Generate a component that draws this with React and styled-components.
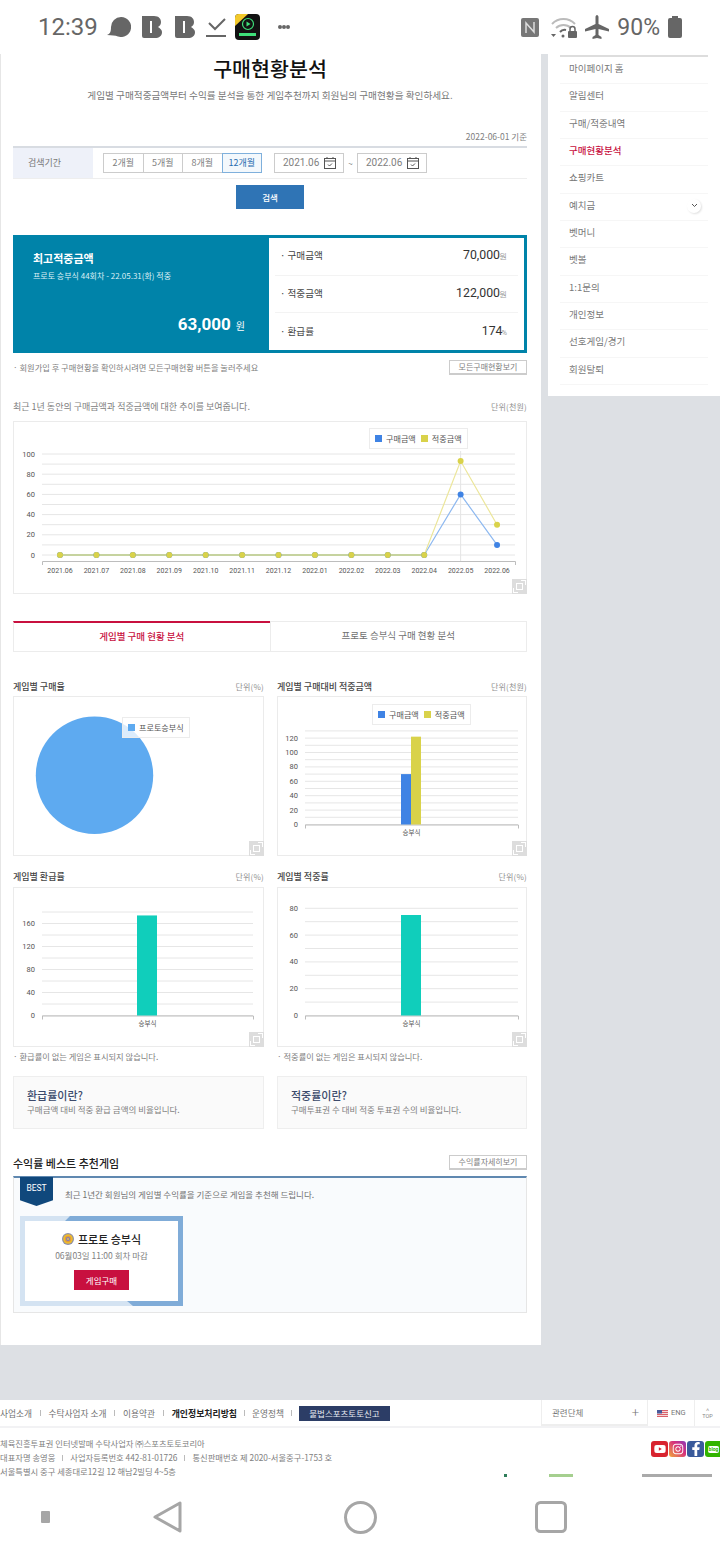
import React from 'react';
import styled, { createGlobalStyle } from 'styled-components';
import { FaYoutube, FaInstagram, FaFacebookF } from 'react-icons/fa';

const GlobalStyle = createGlobalStyle`
  html, body {
    margin: 0;
    padding: 0;
    background: #fff;
  }
  body {
    font-family: "Noto Sans CJK KR", "Noto Sans", sans-serif;
    color: #666;
  }
  * {
    box-sizing: border-box;
  }
`;

const RED = '#c8103f';
const BLUE = '#3f83e4';
const YELLOW = '#d9d24a';
const TEAL = '#10cebb';

const Screen = styled.div`
  width: 720px;
  height: 1560px;
  display: flex;
  flex-direction: column;
  overflow: hidden;
  background: #fff;
`;

/* status bar */
const StatusBar = styled.div`
  height: 54px;
  flex: none;
  display: flex;
  align-items: center;
  padding: 0 38px 0 38px;
  color: #666;
`;

const Clock = styled.span`
  font: 400 24px/1 Roboto, sans-serif;
  width: 69px;
`;

const NoticeIcons = styled.div`
  display: flex;
  align-items: center;
  gap: 11px;
`;

const SystemIcons = styled.div`
  margin-left: auto;
  display: flex;
  align-items: center;
  gap: 8px;
`;

const Battery = styled.span`
  font: 400 23px/1 Roboto, sans-serif;
`;

const Content = styled.div`
  height: 1346px;
  flex: none;
  display: flex;
  align-items: flex-start;
  background: #dde0e4;
`;

/* main column */
const Main = styled.main`
  width: 541px;
  height: 1291px;
  flex: none;
  background: #fff;
  border-left: 1px solid #e6e6e6;
  padding: 0 14px 0 12px;
`;

const PageTitle = styled.h1`
  margin: 0;
  height: 29px;
  font-size: 20.6px;
  line-height: 29px;
  font-weight: 500;
  color: #111;
  text-align: center;
`;

const PageLead = styled.p`
  margin: 5px 0 0;
  height: 14px;
  font-size: 9.65px;
  line-height: 14px;
  text-align: center;
  color: #777;
`;

const BaseDate = styled.div`
  margin-top: 28px;
  height: 12px;
  font-size: 8.5px;
  line-height: 12px;
  text-align: right;
  color: #808080;
`;

const SearchRow = styled.div`
  margin-top: 4px;
  height: 33px;
  display: flex;
  align-items: center;
  border-top: 2px solid #d8dce2;
  border-bottom: 1px solid #eee;
`;

const SearchLabel = styled.div`
  width: 80px;
  height: 100%;
  background: #eef1f9;
  font-size: 9px;
  line-height: 30px;
  padding-left: 15px;
  color: #777;
`;

const PeriodButtons = styled.div`
  display: flex;
  margin-left: 10px;
`;

const PeriodButton = styled.div`
  width: 40.5px;
  height: 20px;
  border: 1px solid ${(p) => (p.$active ? '#7fb0dc' : '#ccc')};
  margin-left: ${(p) => (p.$first ? '0' : '-1px')};
  background: ${(p) => (p.$active ? '#f3f8fc' : '#fff')};
  color: ${(p) => (p.$active ? '#2a6db0' : '#808080')};
  font-size: 9px;
  line-height: 18px;
  text-align: center;
  position: relative;
  z-index: ${(p) => (p.$active ? 1 : 0)};
`;

const DateField = styled.div`
  width: ${(p) => p.$width}px;
  height: 20px;
  border: 1px solid #ccc;
  display: flex;
  align-items: center;
  justify-content: space-between;
  padding: 0 7px 0 8px;
  font: 400 10px/1 Roboto, sans-serif;
  color: #808080;
`;

const DateFields = styled.div`
  display: flex;
  align-items: center;
  margin-left: 12px;
`;

const Tilde = styled.span`
  width: 13px;
  text-align: center;
  font-size: 8px;
  color: #777;
`;

const SearchButton = styled.div`
  margin: 6px auto 0;
  width: 68px;
  height: 24px;
  background: #2f74b5;
  color: #fff;
  font-size: 8.5px;
  font-weight: 500;
  line-height: 24px;
  text-align: center;
`;

/* summary box */
const Summary = styled.section`
  margin-top: 26px;
  height: 118px;
  display: flex;
  background: #0083a9;
  padding: 3px;
`;

const SummaryBest = styled.div`
  flex: 1;
  display: flex;
  flex-direction: column;
  padding: 14px 24px 15px 17px;
  color: #fff;
`;

const BestTitle = styled.div`
  font-size: 11px;
  font-weight: 700;
  line-height: 12px;
`;

const BestSub = styled.div`
  margin-top: 7px;
  font-size: 8px;
  line-height: 10px;
  color: #dceff5;
`;

const BestAmount = styled.div`
  margin-top: auto;
  display: flex;
  justify-content: flex-end;
  align-items: baseline;
  gap: 5px;
  line-height: 18px;
  font-size: 10px;
`;

const BestValue = styled.span`
  font: 700 17px/18px Roboto, sans-serif;
`;

const SummaryList = styled.div`
  width: 255px;
  flex: none;
  background: #fff;
  padding: 0 6px;
  display: flex;
  flex-direction: column;
`;

const SummaryRow = styled.div`
  flex: 1;
  display: flex;
  align-items: center;
  justify-content: space-between;
  padding: 0 11px 2px 5px;
  font-size: 9.6px;
  color: #444;
  border-bottom: ${(p) => (p.$last ? 'none' : '1px solid #f3f3f3')};
`;

const SummaryValue = styled.span`
  font: 400 12.3px/1 Roboto, sans-serif;
  color: #333;

  small {
    font-size: 7.5px;
    color: #999;
    margin-left: -1px;
  }
`;

const SpreadRow = styled.div`
  margin-top: ${(p) => p.$top ?? 0}px;
  height: ${(p) => p.$height ?? 15}px;
  display: flex;
  align-items: center;
  justify-content: space-between;
`;

const Note = styled.span`
  font-size: ${(p) => p.$size ?? 8.26}px;
  color: #808080;
`;

const OutlineButton = styled.span`
  width: 78px;
  height: 15px;
  border: 1px solid #ccc;
  border-bottom-width: 2px;
  background: #fff;
  font-size: 8px;
  line-height: 12px;
  text-align: center;
  color: #808080;
`;

const Unit = styled.span`
  font-size: 8px;
  letter-spacing: 0.2px;
  color: #909090;
`;

/* chart cards */
const ChartCard = styled.div`
  position: relative;
  height: ${(p) => p.$height}px;
  margin-top: ${(p) => p.$top}px;
  border: 1px solid #ebebeb;
  background: #fff;

  svg.plot {
    display: block;
  }
`;

const Legend = styled.div`
  position: absolute;
  left: ${(p) => p.$left}px;
  top: ${(p) => p.$top}px;
  height: 21px;
  padding: 0 5px 0 5px;
  display: flex;
  align-items: center;
  gap: 5px;
  border: 1px solid #ececec;
  background: rgba(255, 255, 255, 0.78);
  font-size: 8.1px;
  color: #555;
`;

const LegendItem = styled.span`
  display: flex;
  align-items: center;
  gap: 4px;

  &::before {
    content: '';
    width: 7px;
    height: 7px;
    background: ${(p) => p.$color};
  }
`;

const ExpandButton = styled.div`
  position: absolute;
  right: -1px;
  bottom: -1px;
  width: 15px;
  height: 15px;
  background: #ddd;
  display: flex;
  align-items: center;
  justify-content: center;
`;

const Tabs = styled.div`
  margin-top: 27px;
  height: 31px;
  display: flex;
`;

const Tab = styled.div`
  flex: 1;
  border: 1px solid #ececec;
  border-top: ${(p) => (p.$active ? `2px solid ${RED}` : '1px solid #ececec')};
  margin-left: ${(p) => (p.$active ? '0' : '-1px')};
  color: ${(p) => (p.$active ? RED : '#707070')};
  font-size: 9.5px;
  font-weight: ${(p) => (p.$active ? 500 : 400)};
  line-height: ${(p) => (p.$active ? '26px' : '27px')};
  text-align: center;
`;

const ChartGrid = styled.div`
  display: grid;
  grid-template-columns: 251px 250px;
  column-gap: 13px;
`;

const PanelTitle = styled.span`
  font-size: 9px;
  font-weight: 500;
  color: #444;
`;

const InfoCard = styled.div`
  height: 53px;
  margin-top: 14px;
  border: 1px solid #eee;
  background: #fafafa;
  padding: 11px 13px 0;
`;

const InfoTitle = styled.div`
  font-size: 11px;
  font-weight: 500;
  line-height: 14px;
  color: #3c4a6b;
`;

const InfoText = styled.div`
  font-size: 8.5px;
  line-height: 14px;
  color: #808080;
`;

const SectionTitle = styled.span`
  font-size: 11px;
  font-weight: 500;
  color: #222;
`;

/* recommended game */
const BestPanel = styled.section`
  position: relative;
  margin-top: 6px;
  height: 137px;
  border: 1px solid #e6e6e6;
  border-top: 2px solid #5f88b0;
  background: #f9fbfd;
  padding: 0 6px;
`;

const Ribbon = styled.div`
  position: absolute;
  left: 6px;
  top: -1px;
  width: 33px;
  height: 29px;
  background: #10487c;
  clip-path: polygon(0 0, 100% 0, 100% 80%, 50% 100%, 0 80%);
  color: #fff;
  font: 400 8.5px/22px Roboto, sans-serif;
  text-align: center;
`;

const BestLead = styled.p`
  margin: 0;
  padding: 10px 0 0 45px;
  font-size: 8.5px;
  line-height: 13px;
  color: #707070;
`;

const GameFrame = styled.div`
  margin-top: 15px;
  width: 163px;
  height: 90px;
  padding: 5px;
  background: #d4e3f2;
  position: relative;

  &::before {
    content: '';
    position: absolute;
    inset: 0;
    background: #80acd8;
    clip-path: polygon(50px 0, 100% 0, 100% 100%, 113px 100%, 107px 85px, 158px 85px, 158px 5px, 45px 5px);
  }
`;

const GameCard = styled.div`
  position: relative;
  height: 80px;
  background: #fff;
  display: flex;
  flex-direction: column;
  align-items: center;
  padding-top: 11px;
`;

const GameName = styled.div`
  display: flex;
  align-items: center;
  gap: 4px;
  font-size: 11px;
  font-weight: 500;
  line-height: 14px;
  color: #222;
`;

const GameDue = styled.div`
  margin-top: 3px;
  font-size: 8.5px;
  line-height: 12px;
  color: #808080;
`;

const BuyButton = styled.div`
  margin-top: 9px;
  width: 55px;
  height: 20px;
  background: ${RED};
  color: #fff;
  font-size: 8.5px;
  line-height: 20px;
  text-align: center;
`;

/* side menu */
const Side = styled.aside`
  width: 172px;
  height: 342px;
  margin-left: 7px;
  background: #fff;
  padding: 1px 12px 0;
`;

const SideList = styled.ul`
  list-style: none;
  margin: 0;
  padding: 0;
  border-top: 2px solid #ddd;
`;

const SideItem = styled.li`
  position: relative;
  height: 27.35px;
  padding-left: 9px;
  border-bottom: 1px solid #f6f6f6;
  font-size: 9.5px;
  line-height: 23px;
  font-weight: ${(p) => (p.$active ? 500 : 400)};
  color: ${(p) => (p.$active ? RED : '#787878')};
`;

const SideToggle = styled.span`
  position: absolute;
  right: 7px;
  top: 5px;
  width: 14px;
  height: 14px;
  border-radius: 50%;
  background: #fff;
  box-shadow: 1px 1px 2px rgba(0, 0, 0, 0.12);
  display: flex;
  align-items: center;
  justify-content: center;
`;

/* footer */
const Footer = styled.footer`
  height: 76.5px;
  flex: none;
  overflow: hidden;
  background: #fff;
`;

const FooterTop = styled.div`
  height: 28px;
  display: flex;
  align-items: center;
  border-bottom: 2px solid #f2f2f4;
  font-size: 8.7px;
  color: #6a6a6a;
`;

const FooterLink = styled.span`
  font-size: ${(p) => (p.$strong ? '8.9px' : 'inherit')};
  font-weight: ${(p) => (p.$strong ? 700 : 400)};
  color: ${(p) => (p.$strong ? '#222' : '#707070')};
`;

const FooterSep = styled.i`
  flex: none;
  width: 1px;
  height: 6px;
  background: #bbb;
  margin: 0 ${(p) => p.$gap ?? 7.8}px;
`;

const ReportButton = styled.span`
  width: 91px;
  height: 15px;
  background: #2c3d66;
  color: #e8ebf2;
  font-size: 8.5px;
  line-height: 15px;
  text-align: center;
`;

const FamilySelect = styled.div`
  width: 107px;
  height: 100%;
  border: 1px solid #eee;
  border-top: none;
  border-bottom-width: 2px;
  display: flex;
  align-items: center;
  justify-content: space-between;
  padding: 0 8px 0 10px;
  font-size: 8.5px;
  color: #777;

  b {
    font: 300 13px/1 Roboto, sans-serif;
  }
`;

const FooterTopRight = styled.div`
  margin-left: auto;
  display: flex;
  align-items: center;
  height: 100%;
`;

const LangButton = styled.span`
  width: 47px;
  height: 100%;
  display: flex;
  align-items: center;
  gap: 3px;
  padding-left: 9px;
  border-right: 1px solid #eee;
  font: 400 7.5px/1 Roboto, sans-serif;
  color: #777;
`;

const TopButton = styled.span`
  width: 25px;
  text-align: center;
  font: 400 5.5px/6px Roboto, sans-serif;
  color: #888;
`;

const FooterBody = styled.div`
  display: flex;
  justify-content: space-between;
`;

const FooterInfo = styled.div`
  padding-top: 9px;
  font-size: 8.3px;
  line-height: 13.8px;
  color: #808080;
`;

const FooterLine = styled.div`
  display: flex;
  align-items: center;
`;

const FooterAside = styled.div`
  width: 216px;
  padding-top: 13px;
`;

const Socials = styled.div`
  display: flex;
  justify-content: flex-end;
  gap: 1px;
  margin-right: -2px;
`;

const SocialIcon = styled.span`
  width: 17px;
  height: 16px;
  border-radius: 3px;
  background: ${(p) => p.$bg};
  color: #fff;
  font-size: ${(p) => p.$size ?? 12}px;
  display: flex;
  align-items: center;
  justify-content: center;
`;

const BlogMark = styled.b`
  font: 700 5px/7px Roboto, sans-serif;
  color: #32b400;
  background: #fff;
  padding: 0 1px;
  border-radius: 2px;
`;

const CertRow = styled.div`
  height: 4px;
  margin-top: 17px;
  display: flex;
  align-items: flex-start;
`;

const CertMark = styled.i`
  height: 3px;
  background: ${(p) => p.$color};
  width: ${(p) => p.$width}px;
  margin-left: ${(p) => p.$gap}px;
`;

/* android navigation */
const NavBar = styled.nav`
  flex: 1;
  background: #fff;
  display: grid;
  grid-template-columns: 90px 156px 228px 154px 1fr;
  align-items: center;
  justify-items: center;
  padding-bottom: 2px;
`;

const NavDot = styled.i`
  width: 9px;
  height: 12px;
  border-radius: 1px;
  background: #a6a6a6;
`;

const months = ['2021.06', '2021.07', '2021.08', '2021.09', '2021.10', '2021.11', '2021.12', '2022.01', '2022.02', '2022.03', '2022.04', '2022.05', '2022.06'];
const buyTrend = [0, 0, 0, 0, 0, 0, 0, 0, 0, 0, 0, 60, 10];
const hitTrend = [0, 0, 0, 0, 0, 0, 0, 0, 0, 0, 0, 93, 30];
const sideMenu = ['마이페이지 홈', '알림센터', '구매/적중내역', '구매현황분석', '쇼핑카트', '예치금', '벳머니', '벳볼', '1:1문의', '개인정보', '선호게임/경기', '회원탈퇴'];
const periods = ['2개월', '5개월', '8개월', '12개월'];

const ExpandIcon = () => (
  <ExpandButton>
    <svg width="15" height="15" viewBox="0 0 15 15" fill="none" stroke="#fff" shapeRendering="crispEdges">
      <rect x="4.5" y="4.5" width="6" height="6" />
      <path d="M9 1.500h4.500V6M6 13.500H1.500V9" />
    </svg>
  </ExpandButton>
);

// y grid with value labels, shared by the line and the bar charts
const Axis = ({ left, right, zero, scale, max, gridStep, labelStep, axisY }) => {
  const lines = [];
  for (let v = 0; v <= max; v += gridStep) lines.push(v);
  return (
    <g>
      {lines.map((v) => (
        <line key={v} x1={left} x2={right} y1={zero - v * scale} y2={zero - v * scale} stroke="#e6e6e6" />
      ))}
      {lines.filter((v) => v % labelStep === 0).map((v) => (
        <text key={v} x={left - 7} y={zero - v * scale + 2.5} textAnchor="end" fontSize="7.5" fontFamily="Roboto, sans-serif" fill="#555">
          {v}
        </text>
      ))}
      <path d={`M${left + 0.5} ${axisY + 4}V${axisY + 0.5}H${right + 0.5}V${axisY + 4}`} fill="none" stroke="#bdbdbd" />
    </g>
  );
};

const TrendChart = () => {
  const left = 28;
  const right = 501;
  const zero = 133;
  const scale = 1.01;
  const px = (i) => 46 + i * 36.42;
  const toPoints = (data) => data.map((v, i) => `${px(i)},${zero - v * scale}`).join(' ');
  return (
    <svg className="plot" width="512" height="171">
      <Axis left={left} right={right} zero={zero} scale={scale} max={100} gridStep={10} labelStep={20} axisY={139} />
      <line x1={px(11)} x2={px(11)} y1="29" y2="139" stroke="#e4e4e4" />
      <polyline points={toPoints(buyTrend)} fill="none" stroke="#8db8f0" strokeWidth="1.2" />
      <polyline points={toPoints(hitTrend)} fill="none" stroke="#ece69a" strokeWidth="1.2" />
      <line x1={px(0)} x2={px(10)} y1={zero} y2={zero} stroke="#b5c97a" strokeWidth="1.2" />
      {buyTrend.map((v, i) => (
        <circle key={i} cx={px(i)} cy={zero - v * scale} r="3" fill={BLUE} />
      ))}
      {hitTrend.map((v, i) => (
        <circle key={i} cx={px(i)} cy={zero - v * scale} r="3" fill={YELLOW} />
      ))}
      {months.map((m, i) => (
        <text key={m} x={px(i)} y="151" textAnchor="middle" fontSize="7" fontFamily="Roboto, sans-serif" fill="#555">
          {m}
        </text>
      ))}
    </svg>
  );
};

const BarChart = ({ left, right, scale, max, gridStep, labelStep, bars, width }) => {
  const zero = 127.5;
  return (
    <svg className="plot" width={width} height="158">
      <Axis left={left} right={right} zero={zero} scale={scale} max={max} gridStep={gridStep} labelStep={labelStep} axisY={zero} />
      {bars.map((b) => (
        <rect key={b.x} x={b.x} y={zero - b.value * scale} width={b.width} height={b.value * scale} fill={b.color} />
      ))}
      <text x={(left + right) / 2} y="137.5" textAnchor="middle" fontSize="6.5" fill="#555">
        승부식
      </text>
    </svg>
  );
};

const CalendarIcon = () => (
  <svg width="12" height="12" viewBox="0 0 12 12" fill="none" stroke="#555">
    <rect x="0.5" y="1.5" width="11" height="10" />
    <path d="M0.5 4h11M3 0v2M9 0v2M4 7.500l1.500 1.500L8 6.500" />
  </svg>
);

const TargetIcon = () => (
  <svg width="12" height="12" viewBox="0 0 12 12">
    <circle cx="6" cy="6" r="6" fill="#8e8ea8" />
    <circle cx="6" cy="6" r="4.800" fill="#eebd2a" />
    <circle cx="6" cy="6" r="3.200" fill="#e39a3a" />
    <circle cx="6" cy="6" r="2" fill="#7a7ac0" />
    <circle cx="6" cy="6" r="0.900" fill="#f0c83a" />
  </svg>
);

const AppBadge = () => (
  <svg width="25" height="26" viewBox="0 0 25 26" style={{ marginLeft: -2 }}>
    <rect width="25" height="26" rx="4" fill="#121212" />
    <path d="M0 4a4 4 0 0 1 4-4h9L0 12z" fill="#f2c92c" />
    <circle cx="13" cy="10" r="5.500" fill="none" stroke="#3fe07a" strokeWidth="1.200" />
    <path d="M11.500 7.500v5l4-2.500z" fill="#3fe07a" />
    <rect x="4" y="19" width="17" height="3" fill="#3fe07a" />
  </svg>
);

const App = () => (
  <Screen>
    <GlobalStyle />
    <StatusBar>
      <Clock>12:39</Clock>
      <NoticeIcons>
        <svg width="24" height="20" viewBox="0 0 24 20" fill="#666">
          <path d="M14 0a10 10 0 1 1-3 19.500C8 18 5 18.500 0 18c3-1 4-3 4-8A10 10 0 0 1 14 0z" />
        </svg>
        <svg width="20" height="24" viewBox="0 0 20 24" fill="#666">
          <path fillRule="evenodd" d="M0 1h12c5 0 7 3 7 6 0 2-1 4-3 5 2 1 4 3 4 5 0 4-3 6-7 6H2a2 2 0 0 1-2-2zM8 6v12h2V6z" />
        </svg>
        <svg width="20" height="24" viewBox="0 0 20 24" fill="#666" style={{ marginLeft: 2 }}>
          <path fillRule="evenodd" d="M0 1h12c5 0 7 3 7 6 0 2-1 4-3 5 2 1 4 3 4 5 0 4-3 6-7 6H2a2 2 0 0 1-2-2zM8 6v12h2V6z" />
        </svg>
        <svg width="20" height="24" viewBox="0 0 20 24" fill="none" stroke="#666" strokeWidth="2">
          <path d="M3 8l6 6L19 4M0 21h20" />
        </svg>
        <AppBadge />
        <svg width="12" height="6" viewBox="0 0 12 6" fill="#666" style={{ marginLeft: 7 }}>
          <circle cx="2" cy="3" r="2" />
          <circle cx="6" cy="3" r="2" />
          <circle cx="10" cy="3" r="2" />
        </svg>
      </NoticeIcons>
      <SystemIcons>
        <svg width="18" height="19" viewBox="0 0 18 19" style={{ marginRight: 4 }}>
          <rect width="18" height="19" rx="2" fill="#777" />
          <path d="M5 15V5l8 9V4" fill="none" stroke="#ddd" strokeWidth="1.500" />
        </svg>
        <svg width="26" height="22" viewBox="0 0 26 22" fill="none">
          <path d="M1 8a16 16 0 0 1 23 0M5 12a11 11 0 0 1 15 0" stroke="#bbb" strokeWidth="2" />
          <path d="M9 16a6 6 0 0 1 6-2" stroke="#666" strokeWidth="2" />
          <path d="M0 18h5l-2.500 3z" fill="#666" />
          <circle cx="12" cy="20" r="1.500" fill="#666" />
          <rect x="17" y="15" width="9" height="7" rx="1" fill="#666" />
          <path d="M19 15v-2a2.500 2.500 0 0 1 5 0v2" stroke="#666" strokeWidth="1.500" />
        </svg>
        <svg width="24" height="24" viewBox="0 0 24 24" fill="#666">
          <path d="M10.500 2c0-1 .7-2 1.500-2s1.500 1 1.500 2v7L24 14v2.500L13.500 14v6l3 2v2L12 23l-4.500 1v-2l3-2v-6L0 16.500V14l10.500-5z" />
        </svg>
        <Battery>90%</Battery>
        <svg width="14" height="22" viewBox="0 0 14 22" fill="#666">
          <path d="M4 0h6v2h2a2 2 0 0 1 2 2v16a2 2 0 0 1-2 2H2a2 2 0 0 1-2-2V4a2 2 0 0 1 2-2h2z" />
        </svg>
      </SystemIcons>
    </StatusBar>

    <Content>
      <Main>
        <PageTitle>구매현황분석</PageTitle>
        <PageLead>게임별 구매적중금액부터 수익률 분석을 통한 게임추천까지 회원님의 구매현황을 확인하세요.</PageLead>
        <BaseDate>2022-06-01 기준</BaseDate>
        <SearchRow>
          <SearchLabel>검색기간</SearchLabel>
          <PeriodButtons>
            {periods.map((p, i) => (
              <PeriodButton key={p} $first={i === 0} $active={i === 3}>{p}</PeriodButton>
            ))}
          </PeriodButtons>
          <DateFields>
            <DateField $width={70}>2021.06<CalendarIcon /></DateField>
            <Tilde>~</Tilde>
            <DateField $width={70}>2022.06<CalendarIcon /></DateField>
          </DateFields>
        </SearchRow>
        <SearchButton>검색</SearchButton>

        <Summary>
          <SummaryBest>
            <BestTitle>최고적중금액</BestTitle>
            <BestSub>프로토 승부식 44회차 - 22.05.31(화) 적중</BestSub>
            <BestAmount>
              <BestValue>63,000</BestValue> 원
            </BestAmount>
          </SummaryBest>
          <SummaryList>
            <SummaryRow>
              <span>· 구매금액</span>
              <SummaryValue>70,000<small>원</small></SummaryValue>
            </SummaryRow>
            <SummaryRow>
              <span>· 적중금액</span>
              <SummaryValue>122,000<small>원</small></SummaryValue>
            </SummaryRow>
            <SummaryRow $last>
              <span>· 환급률</span>
              <SummaryValue>174<small>%</small></SummaryValue>
            </SummaryRow>
          </SummaryList>
        </Summary>
        <SpreadRow $top={6} $height={16}>
          <Note>· 회원가입 후 구매현황을 확인하시려면 모든구매현황 버튼을 눌러주세요</Note>
          <OutlineButton>모든구매현황보기</OutlineButton>
        </SpreadRow>

        <SpreadRow $top={25} $height={12}>
          <Note $size={9}>최근 1년 동안의 구매금액과 적중금액에 대한 추이를 보여줍니다.</Note>
          <Unit>단위(천원)</Unit>
        </SpreadRow>
        <ChartCard $height={173} $top={9}>
          <TrendChart />
          <Legend $left={355} $top={6}>
            <LegendItem $color={BLUE}>구매금액</LegendItem>
            <LegendItem $color={YELLOW}>적중금액</LegendItem>
          </Legend>
          <ExpandIcon />
        </ChartCard>

        <Tabs>
          <Tab $active>게임별 구매 현황 분석</Tab>
          <Tab>프로토 승부식 구매 현황 분석</Tab>
        </Tabs>

        <ChartGrid>
          <div>
            <SpreadRow $top={28} $height={12}>
              <PanelTitle>게임별 구매율</PanelTitle>
              <Unit>단위(%)</Unit>
            </SpreadRow>
            <ChartCard $height={160} $top={4}>
              <svg className="plot" width="249" height="158">
                <circle cx="80.5" cy="78.3" r="58.7" fill="#5eaaf0" />
              </svg>
              <Legend $left={108} $top={20}>
                <LegendItem $color="#5eaaf0">프로토승부식</LegendItem>
              </Legend>
              <ExpandIcon />
            </ChartCard>
          </div>
          <div>
            <SpreadRow $top={28} $height={12}>
              <PanelTitle>게임별 구매대비 적중금액</PanelTitle>
              <Unit>단위(천원)</Unit>
            </SpreadRow>
            <ChartCard $height={160} $top={4}>
              <BarChart
                width={248}
                left={27}
                right={240}
                scale={0.72}
                max={130}
                gridStep={10}
                labelStep={20}
                bars={[
                  { x: 123, width: 10, value: 70, color: BLUE },
                  { x: 133, width: 10, value: 122, color: YELLOW },
                ]}
              />
              <Legend $left={94} $top={7}>
                <LegendItem $color={BLUE}>구매금액</LegendItem>
                <LegendItem $color={YELLOW}>적중금액</LegendItem>
              </Legend>
              <ExpandIcon />
            </ChartCard>
          </div>
          <div>
            <SpreadRow $top={14} $height={12}>
              <PanelTitle>게임별 환급률</PanelTitle>
              <Unit>단위(%)</Unit>
            </SpreadRow>
            <ChartCard $height={160} $top={5}>
              <BarChart
                width={249}
                left={28}
                right={239}
                scale={0.575}
                max={180}
                gridStep={20}
                labelStep={40}
                bars={[{ x: 123, width: 20, value: 174, color: TEAL }]}
              />
              <ExpandIcon />
            </ChartCard>
            <SpreadRow $top={3} $height={12}>
              <Note>· 환급률이 없는 게임은 표시되지 않습니다.</Note>
            </SpreadRow>
            <InfoCard>
              <InfoTitle>환급률이란?</InfoTitle>
              <InfoText>구매금액 대비 적중 환급 금액의 비율입니다.</InfoText>
            </InfoCard>
          </div>
          <div>
            <SpreadRow $top={14} $height={12}>
              <PanelTitle>게임별 적중률</PanelTitle>
              <Unit>단위(%)</Unit>
            </SpreadRow>
            <ChartCard $height={160} $top={5}>
              <BarChart
                width={248}
                left={27}
                right={240}
                scale={1.34}
                max={80}
                gridStep={10}
                labelStep={20}
                bars={[{ x: 123, width: 20, value: 75, color: TEAL }]}
              />
              <ExpandIcon />
            </ChartCard>
            <SpreadRow $top={3} $height={12}>
              <Note>· 적중률이 없는 게임은 표시되지 않습니다.</Note>
            </SpreadRow>
            <InfoCard>
              <InfoTitle>적중률이란?</InfoTitle>
              <InfoText>구매투표권 수 대비 적중 투표권 수의 비율입니다.</InfoText>
            </InfoCard>
          </div>
        </ChartGrid>

        <SpreadRow $top={26} $height={15}>
          <SectionTitle>수익률 베스트 추천게임</SectionTitle>
          <OutlineButton>수익률자세히보기</OutlineButton>
        </SpreadRow>
        <BestPanel>
          <Ribbon>BEST</Ribbon>
          <BestLead>최근 1년간 회원님의 게임별 수익률을 기준으로 게임을 추천해 드립니다.</BestLead>
          <GameFrame>
            <GameCard>
              <GameName><TargetIcon />프로토 승부식</GameName>
              <GameDue>06월03일 11:00 회차 마감</GameDue>
              <BuyButton>게임구매</BuyButton>
            </GameCard>
          </GameFrame>
        </BestPanel>
      </Main>

      <Side>
        <SideList>
          {sideMenu.map((item, i) => (
            <SideItem key={item} $active={i === 3}>
              {item}
              {i === 5 && (
                <SideToggle>
                  <svg width="7" height="5" viewBox="0 0 7 5" fill="none" stroke="#555">
                    <path d="M1 1l2.500 2.500L6 1" />
                  </svg>
                </SideToggle>
              )}
            </SideItem>
          ))}
        </SideList>
      </Side>
    </Content>

    <Footer>
      <FooterTop>
        <FooterLink>사업소개</FooterLink>
        <FooterSep />
        <FooterLink>수탁사업자 소개</FooterLink>
        <FooterSep />
        <FooterLink>이용약관</FooterLink>
        <FooterSep />
        <FooterLink $strong>개인정보처리방침</FooterLink>
        <FooterSep $gap={7} />
        <FooterLink>운영정책</FooterLink>
        <FooterSep $gap={7} />
        <ReportButton>불법스포츠토토신고</ReportButton>
        <FooterTopRight>
          <FamilySelect>관련단체<b>+</b></FamilySelect>
          <LangButton>
            <svg width="11" height="7" viewBox="0 0 11 7">
              <rect width="11" height="7" fill="#d9606a" />
              <path d="M0 1.500h11M0 3.500h11M0 5.500h11" stroke="#f2dada" />
              <rect width="5" height="3.500" fill="#4a5a9a" />
            </svg>
            ENG
          </LangButton>
          <TopButton>
            ˄
            <br />
            TOP
          </TopButton>
        </FooterTopRight>
      </FooterTop>
      <FooterBody>
        <FooterInfo>
          <FooterLine>체육진흥투표권 인터넷발매 수탁사업자 ㈜스포츠토토코리아</FooterLine>
          <FooterLine>
            대표자명 송영웅
            <FooterSep $gap={7} />
            사업자등록번호 442-81-01726
            <FooterSep $gap={7} />
            통신판매번호 제 2020-서울중구-1753 호
          </FooterLine>
          <FooterLine>서울특별시 중구 세종대로12길 12 해남2빌딩 4~5층</FooterLine>
        </FooterInfo>
        <FooterAside>
          <Socials>
            <SocialIcon $bg="#d8232f"><FaYoutube /></SocialIcon>
            <SocialIcon $bg="linear-gradient(45deg, #f2a93b, #d6307c 60%, #8a3ab9)"><FaInstagram /></SocialIcon>
            <SocialIcon $bg="#3a5a9b" $size={14}><FaFacebookF /></SocialIcon>
            <SocialIcon $bg="#32b400"><BlogMark>blog</BlogMark></SocialIcon>
          </Socials>
          <CertRow>
            <CertMark $color="#2f7d5a" $width={3} $gap={0} />
            <CertMark $color="#a5cf8f" $width={24} $gap={42} />
            <CertMark $color="#aaa" $width={70} $gap={69} />
          </CertRow>
        </FooterAside>
      </FooterBody>
    </Footer>

    <NavBar>
      <NavDot />
      <svg width="30" height="32" viewBox="0 0 30 32" fill="none" stroke="#a6a6a6" strokeWidth="3" strokeLinejoin="round">
        <path d="M27 2v28L2 16z" />
      </svg>
      <svg width="33" height="33" viewBox="0 0 33 33" fill="none" stroke="#a6a6a6" strokeWidth="3">
        <circle cx="16.500" cy="16.500" r="15" />
      </svg>
      <svg width="32" height="32" viewBox="0 0 32 32" fill="none" stroke="#a6a6a6" strokeWidth="3">
        <rect x="1.500" y="1.500" width="29" height="29" rx="4" />
      </svg>
    </NavBar>
  </Screen>
);

export default App;
